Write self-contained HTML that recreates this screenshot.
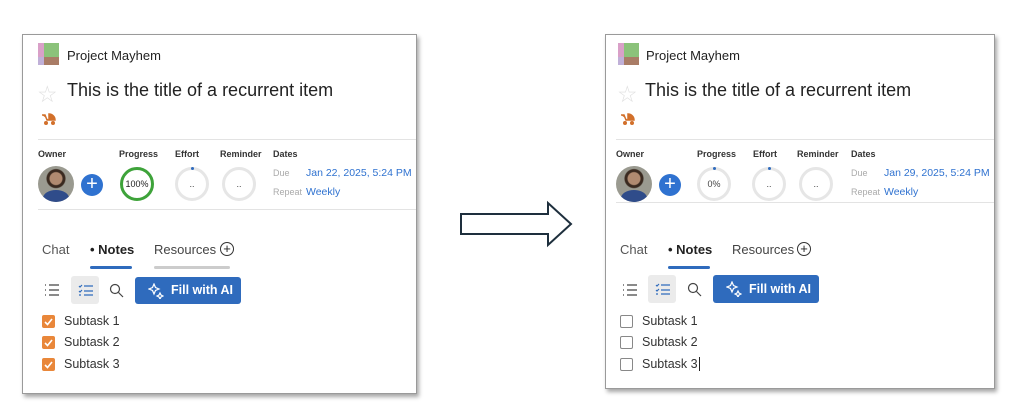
<!DOCTYPE html>
<html><head><meta charset="utf-8"><style>
*{margin:0;padding:0;box-sizing:border-box}
body{width:1024px;height:419px;background:#fff;position:relative;overflow:hidden;font-family:"Liberation Sans",sans-serif;color:#222}
.p{position:absolute;top:34px;background:#fff;border:1px solid #9a9a9a;box-shadow:2px 3px 4px rgba(0,0,0,.35)}
.a{position:absolute;white-space:nowrap}
.lbl{font-size:9px;font-weight:bold;color:#333;top:114px}
.ring{position:absolute;width:34px;height:34px;border-radius:50%;border:3px solid #e6e6e6;font-size:9px;text-align:center;line-height:28px;color:#444}
.dot{position:absolute;width:3px;height:3px;border-radius:50%;background:#2f6bbd;left:13px;top:-3px}
.cb{position:absolute;left:19px;width:13px;height:13px;border-radius:2px}
.st{position:absolute;left:41px;font-size:12.5px;color:#333}
.dt{font-size:10.5px;color:#2f72d0}
</style></head><body>

<svg class="a" style="left:458px;top:200px" width="118" height="48"><path d="M3 14 H90 V3 L113 24 L90 45 V34 H3 Z" fill="#fff" stroke="#1e2f3d" stroke-width="2"/></svg>

<div class="p" style="left:22px;width:395px;height:360px">
<div class="a" style="left:15px;top:8px;width:21px;height:22px;background:#8bc27a"></div>
<div class="a" style="left:15px;top:8px;width:6px;height:22px;background:#d9a0c8"></div>
<div class="a" style="left:21px;top:22px;width:15px;height:8px;background:#a97c66"></div>
<div class="a" style="left:15px;top:22px;width:6px;height:8px;background:#c0b0d8"></div>
<div class="a" style="left:44px;top:13px;font-size:13px">Project Mayhem</div>
<div class="a" style="left:14px;top:46px;font-size:23px;color:#e0e0e0">☆</div>
<div class="a" style="left:44px;top:45px;font-size:18px;color:#222">This is the title of a recurrent item</div>
<svg class="a" style="left:18px;top:77px" width="16" height="14"><path d="M1 3 h3 l2 5 h8 a6 6 0 0 0 -6 -6 v6" fill="#d2702b" stroke="#d2702b" stroke-width="1.5"/><circle cx="5" cy="11" r="2" fill="#d2702b"/><circle cx="12" cy="11" r="2" fill="#d2702b"/></svg>
<div class="a" style="left:15px;top:104px;right:0;height:1px;background:#e3e3e3"></div>
<div class="a lbl" style="left:15px">Owner</div>
<div class="a lbl" style="left:96px">Progress</div>
<div class="a lbl" style="left:152px">Effort</div>
<div class="a lbl" style="left:197px">Reminder</div>
<div class="a lbl" style="left:250px">Dates</div>
<div class="a" style="left:15px;top:131px;width:36px;height:36px;border-radius:50%;background:radial-gradient(circle at 50% 35%,#b08a70 0 6px,#3a2a20 7px 9px,#9a9a90 10px);overflow:hidden"><div style="position:absolute;left:5px;top:24px;width:26px;height:16px;border-radius:50%;background:#2f4c8a"></div></div>
<div class="a" style="left:58px;top:139px;width:22px;height:22px;border-radius:50%;background:#2f72d0;color:#fff;font-size:20px;line-height:21px;text-align:center">+</div>
<div class="ring" style="left:97px;top:132px;border-color:#3ea33a;color:#222">100%</div>
<div class="ring" style="left:152px;top:132px"><span class="dot"></span>..</div>
<div class="ring" style="left:199px;top:132px">..</div>
<div class="a" style="left:250px;top:133px;font-size:9px;color:#aaa">Due</div>
<div class="a dt" style="left:283px;top:132px">Jan 22, 2025, 5:24 PM</div>
<div class="a" style="left:250px;top:152px;font-size:9px;color:#aaa">Repeat</div>
<div class="a dt" style="left:283px;top:151px">Weekly</div>
<div class="a" style="left:15px;top:174px;right:0;height:1px;background:#e3e3e3"></div>
<div class="a" style="left:19px;top:207px;font-size:13px;color:#555">Chat</div>
<div class="a" style="left:67px;top:207px;font-size:13px;font-weight:bold">• Notes</div>
<div class="a" style="left:131px;top:207px;font-size:13px;color:#444">Resources</div>
<div class="a" style="left:197px;top:207px;width:14px;height:14px;border:1px solid #333;border-radius:50%;font-size:13px;line-height:12px;text-align:center">+</div>
<div class="a" style="left:67px;top:231px;width:42px;height:3px;border-radius:2px;background:#2f6bbd"></div>
<div class="a" style="left:131px;top:231px;width:76px;height:3px;border-radius:2px;background:#ccc"></div>
<svg class="a" style="left:21px;top:249px" width="16" height="12" stroke="#444" stroke-width="1.2"><path d="M1 1h1M1 6h1M1 11h1M5 1h10M5 6h10M5 11h10"/></svg>
<div class="a" style="left:48px;top:241px;width:28px;height:28px;border-radius:3px;background:#ebebeb"></div>
<svg class="a" style="left:55px;top:249px" width="16" height="13" stroke="#2f6bbd" stroke-width="1.2" fill="none"><path d="M1 2l1 1 2-2M1 7l1 1 2-2M1 11h2M6 2h9M6 7h9M6 11h9"/></svg>
<svg class="a" style="left:86px;top:248px" width="15" height="15" stroke="#444" stroke-width="1.2" fill="none"><circle cx="6" cy="6" r="4.5"/><path d="M9.5 9.5L14 14"/></svg>
<div class="a" style="left:112px;top:242px;width:106px;height:27px;border-radius:3px;background:#2f6bbd;color:#fff;font-size:12.5px;font-weight:bold;line-height:27px;padding-left:36px">Fill with AI</div>
<svg class="a" style="left:125px;top:248px" width="16" height="16" stroke="#fff" stroke-width="1.2" fill="none"><path d="M6 1l1.5 3.5L11 6 7.5 7.5 6 11 4.5 7.5 1 6l3.5-1.5z"/><path d="M12 10l1 2 2 1-2 1-1 2-1-2-2-1 2-1z"/></svg>
<div class="cb" style="top:280px;background:#e9873a"></div><div class="st" style="top:279px">Subtask 1</div>
<div class="cb" style="top:301px;background:#e9873a"></div><div class="st" style="top:300px">Subtask 2</div>
<div class="cb" style="top:323px;background:#e9873a"></div><div class="st" style="top:322px">Subtask 3</div>
<svg class="a" style="left:19px;top:280px" width="13" height="60" stroke="#fff" stroke-width="1.6" fill="none"><path d="M3 7l2.5 2.5L10 4M3 28l2.5 2.5L10 25M3 50l2.5 2.5L10 47"/></svg>
</div>

<div class="p" style="left:605px;width:390px;height:355px">
<div class="a" style="left:12px;top:8px;width:21px;height:22px;background:#8bc27a"></div>
<div class="a" style="left:12px;top:8px;width:6px;height:22px;background:#d9a0c8"></div>
<div class="a" style="left:18px;top:22px;width:15px;height:8px;background:#a97c66"></div>
<div class="a" style="left:12px;top:22px;width:6px;height:8px;background:#c0b0d8"></div>
<div class="a" style="left:40px;top:13px;font-size:13px">Project Mayhem</div>
<div class="a" style="left:11px;top:46px;font-size:23px;color:#e0e0e0">☆</div>
<div class="a" style="left:39px;top:45px;font-size:18px;color:#222">This is the title of a recurrent item</div>
<svg class="a" style="left:14px;top:77px" width="16" height="14"><path d="M1 3 h3 l2 5 h8 a6 6 0 0 0 -6 -6 v6" fill="#d2702b" stroke="#d2702b" stroke-width="1.5"/><circle cx="5" cy="11" r="2" fill="#d2702b"/><circle cx="12" cy="11" r="2" fill="#d2702b"/></svg>
<div class="a" style="left:10px;top:104px;right:0;height:1px;background:#e3e3e3"></div>
<div class="a lbl" style="left:10px">Owner</div>
<div class="a lbl" style="left:91px">Progress</div>
<div class="a lbl" style="left:147px">Effort</div>
<div class="a lbl" style="left:191px">Reminder</div>
<div class="a lbl" style="left:245px">Dates</div>
<div class="a" style="left:10px;top:131px;width:36px;height:36px;border-radius:50%;background:radial-gradient(circle at 50% 35%,#b08a70 0 6px,#3a2a20 7px 9px,#9a9a90 10px);overflow:hidden"><div style="position:absolute;left:5px;top:24px;width:26px;height:16px;border-radius:50%;background:#2f4c8a"></div></div>
<div class="a" style="left:53px;top:139px;width:22px;height:22px;border-radius:50%;background:#2f72d0;color:#fff;font-size:20px;line-height:21px;text-align:center">+</div>
<div class="ring" style="left:91px;top:132px"><span class="dot"></span>0%</div>
<div class="ring" style="left:146px;top:132px"><span class="dot"></span>..</div>
<div class="ring" style="left:193px;top:132px">..</div>
<div class="a" style="left:245px;top:133px;font-size:9px;color:#aaa">Due</div>
<div class="a dt" style="left:278px;top:132px">Jan 29, 2025, 5:24 PM</div>
<div class="a" style="left:245px;top:152px;font-size:9px;color:#aaa">Repeat</div>
<div class="a dt" style="left:278px;top:151px">Weekly</div>
<div class="a" style="left:10px;top:167px;right:0;height:1px;background:#e3e3e3"></div>
<div class="a" style="left:14px;top:207px;font-size:13px;color:#555">Chat</div>
<div class="a" style="left:62px;top:207px;font-size:13px;font-weight:bold">• Notes</div>
<div class="a" style="left:126px;top:207px;font-size:13px;color:#444">Resources</div>
<div class="a" style="left:191px;top:207px;width:14px;height:14px;border:1px solid #333;border-radius:50%;font-size:13px;line-height:12px;text-align:center">+</div>
<div class="a" style="left:62px;top:231px;width:42px;height:3px;border-radius:2px;background:#2f6bbd"></div>
<svg class="a" style="left:16px;top:249px" width="16" height="12" stroke="#444" stroke-width="1.2"><path d="M1 1h1M1 6h1M1 11h1M5 1h10M5 6h10M5 11h10"/></svg>
<div class="a" style="left:42px;top:240px;width:28px;height:28px;border-radius:3px;background:#ebebeb"></div>
<svg class="a" style="left:49px;top:248px" width="16" height="13" stroke="#2f6bbd" stroke-width="1.2" fill="none"><path d="M1 2l1 1 2-2M1 7l1 1 2-2M1 11h2M6 2h9M6 7h9M6 11h9"/></svg>
<svg class="a" style="left:81px;top:247px" width="15" height="15" stroke="#444" stroke-width="1.2" fill="none"><circle cx="6" cy="6" r="4.5"/><path d="M9.5 9.5L14 14"/></svg>
<div class="a" style="left:107px;top:240px;width:106px;height:28px;border-radius:3px;background:#2f6bbd;color:#fff;font-size:12.5px;font-weight:bold;line-height:28px;padding-left:36px">Fill with AI</div>
<svg class="a" style="left:120px;top:246px" width="16" height="16" stroke="#fff" stroke-width="1.2" fill="none"><path d="M6 1l1.5 3.5L11 6 7.5 7.5 6 11 4.5 7.5 1 6l3.5-1.5z"/><path d="M12 10l1 2 2 1-2 1-1 2-1-2-2-1 2-1z"/></svg>
<div class="cb" style="left:14px;top:280px;border:1.5px solid #888"></div><div class="st" style="left:36px;top:279px">Subtask 1</div>
<div class="cb" style="left:14px;top:301px;border:1.5px solid #888"></div><div class="st" style="left:36px;top:300px">Subtask 2</div>
<div class="cb" style="left:14px;top:323px;border:1.5px solid #888"></div><div class="st" style="left:36px;top:322px">Subtask 3<span style="border-left:1px solid #222;margin-left:1px"></span></div>
</div>
</body></html>
